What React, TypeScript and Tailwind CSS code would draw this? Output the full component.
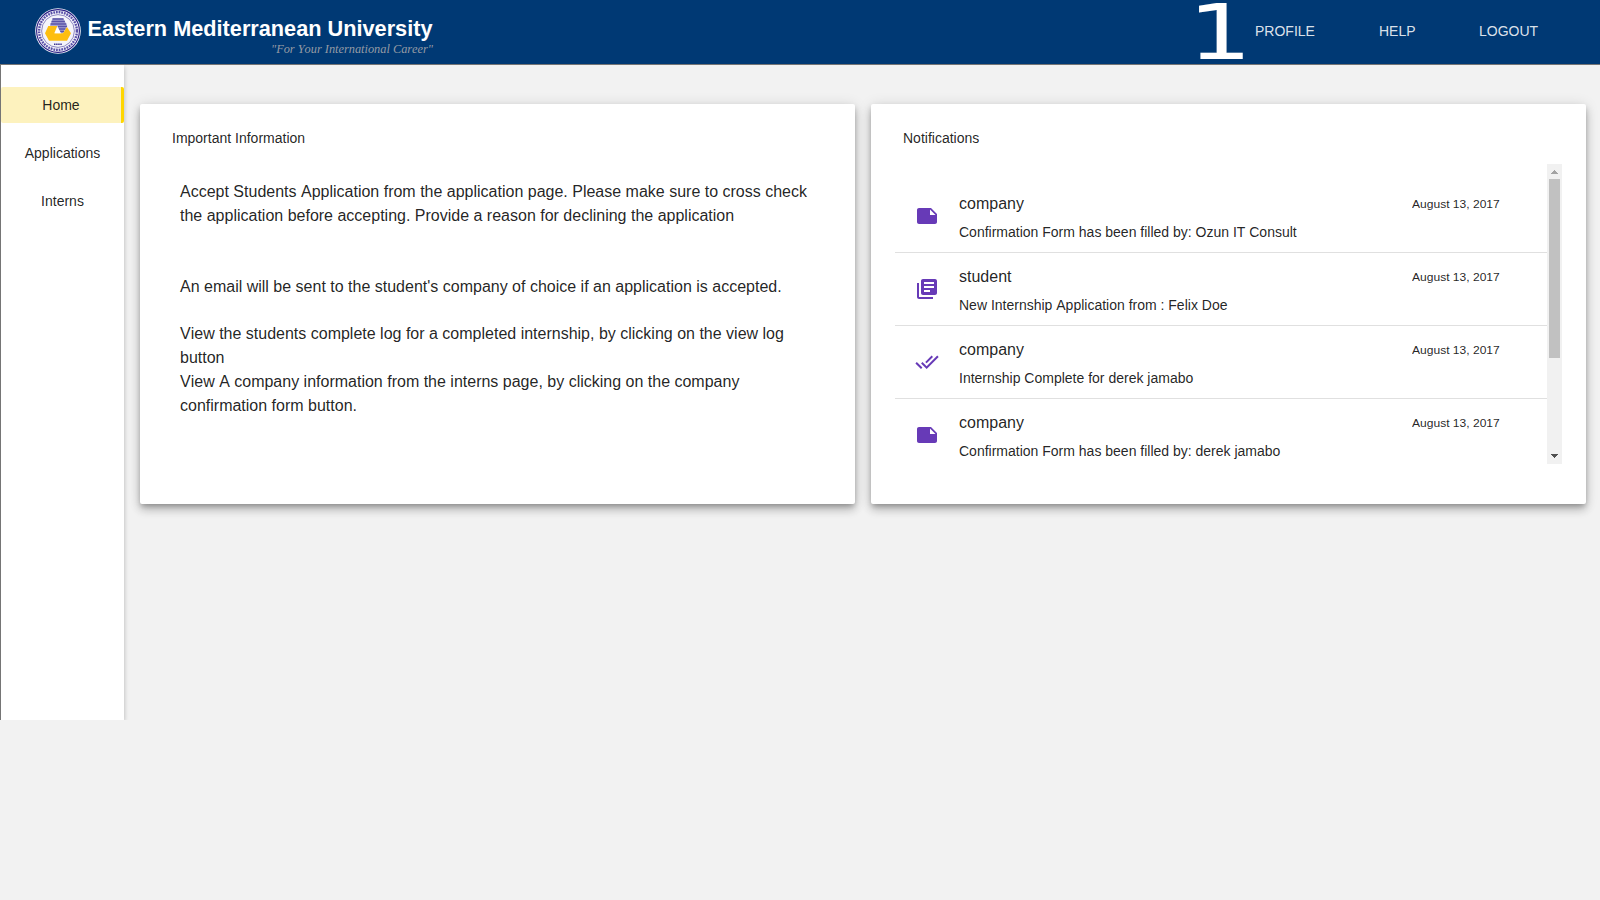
import React from "react";
import { MdNote, MdLibraryBooks, MdDoneAll } from "react-icons/md";

const cardClass =
  "h-[400px] flex-1 rounded-[2px] bg-white shadow-[0_3px_5px_-1px_rgba(0,0,0,0.22),0_6px_10px_0_rgba(0,0,0,0.2),0_1px_14px_0_rgba(0,0,0,0.12)]";

const notifications = [
  { icon: MdNote, title: "company", text: "Confirmation Form has been filled by: Ozun IT Consult" },
  { icon: MdLibraryBooks, title: "student", text: "New Internship Application from : Felix Doe" },
  { icon: MdDoneAll, title: "company", text: "Internship Complete for derek jamabo" },
  { icon: MdNote, title: "company", text: "Confirmation Form has been filled by: derek jamabo" },
];

function Logo() {
  return (
    <svg width="410" height="54" viewBox="0 0 410 54" className="ml-[34px] mt-[7px] block overflow-visible">
      <circle cx="24" cy="24" r="22.8" fill="#f4f4fa" />
      <circle cx="24" cy="24" r="21.4" fill="none" stroke="#2b1f86" strokeWidth="1.1" />
      <circle cx="24" cy="24" r="18.900" fill="none" stroke="#5950a8" strokeWidth="2.4" strokeDasharray="1.8 0.9" />
      <circle cx="24" cy="24" r="16.4" fill="none" stroke="#4a409c" strokeWidth="0.6" />
      <path d="M18.700 11.300h10.600l4 7.700-4.300 7.300H25.500l-2.200-7.300H16z" fill="#a5a3d2" />
      <path d="M18.500 12h11M17.500 14.500h13.400M16.500 17h15.800M24 19.500h9M25 22h6.500M26 24.500h4" stroke="#5a54a8" strokeWidth="1.300" />
      <path d="M14.300 19h9l-3 7.300h8.700l4-6.300 4 6.300-4 7.400H15L11 26.300z" fill="#fdbe10" />
      <path d="M23.500 20l3.600 6.300h-6.400z" fill="#fff" />
      <path d="M20 37.200h8" stroke="#3b338f" strokeWidth="1.600" strokeDasharray="1.500 .6" />
      <text x="53.500" y="29" fontSize="21.500" fontWeight="700" fill="#fff" textLength="345" lengthAdjust="spacingAndGlyphs" fontFamily="'Liberation Sans', sans-serif">
        Eastern Mediterranean University
      </text>
      <text x="237" y="46" fontSize="13.500" fontStyle="italic" fill="#959ba4" textLength="162" lengthAdjust="spacingAndGlyphs" fontFamily="'Liberation Serif', serif">
        "For Your International Career"
      </text>
    </svg>
  );
}

function Header() {
  return (
    <header className="flex h-16 items-start justify-between bg-[#003974]">
      <Logo />
      <nav className="flex h-16 text-[14px] leading-[62px] text-white/87">
        <svg width="66" height="64" className="mr-px block overflow-visible">
          <text x="0" y="59" fontSize="76.800" fill="#fff" textLength="64" lengthAdjust="spacingAndGlyphs" fontFamily="'DejaVu Sans', sans-serif">
            1
          </text>
        </svg>
        <a className="w-[124px]">PROFILE</a>
        <a className="w-[100px]">HELP</a>
        <a className="w-[121px]">LOGOUT</a>
      </nav>
    </header>
  );
}

function Sidebar() {
  return (
    <aside className="-mr-[9px] flex h-[655px] w-[134px] shrink-0 overflow-hidden border-l border-[#757575]">
      <div className="h-full w-[123px] shrink-0 bg-white pt-[22px] text-center text-[14px] leading-9 shadow-[0_2px_5px_0_rgba(0,0,0,0.26)]">
        <div className="h-9 rounded-[2px] border-r-[3px] border-[#ffd600] bg-[#fdf2be]">Home</div>
        <div className="mt-3">Applications</div>
        <div className="mt-3">Interns</div>
      </div>
    </aside>
  );
}

function Scrollbar() {
  return (
    <div className="flex h-[300px] w-[15px] flex-col items-center bg-[#f1f1f1]">
      <svg width="15" height="15" shapeRendering="crispEdges">
        <path d="M4 10h7L7.500 6z" fill="#a3a3a3" />
      </svg>
      <div className="h-[179px] w-[11px] bg-[#c1c1c1]" />
      <svg width="15" height="15" className="mt-auto" shapeRendering="crispEdges">
        <path d="M4 5h7L7.500 9z" fill="#505050" />
      </svg>
    </div>
  );
}

export default function App() {
  return (
    <div className="h-[900px] w-[1600px] overflow-hidden bg-[#f2f2f2] font-['Liberation_Sans',sans-serif] text-black/87 [font-kerning:none]">
      <Header />
      <div className="flex border-t border-[#757575]">
        <Sidebar />
        <main className="flex flex-1 gap-4 pl-[15px] pr-[14px] pt-[39px]">
          <section className={cardClass}>
            <h2 className="pl-8 pt-6 text-[14px] leading-5">Important Information</h2>
            <div className="w-[680px] pl-10 pt-8 text-[16px] leading-6">
              <p>Accept Students Application from the application page. Please make sure to cross check the application before accepting. Provide a reason for declining the application</p>
              <p className="mt-[47px]">An email will be sent to the student's company of choice if an application is accepted.</p>
              <p className="mt-[23px]">View the students complete log for a completed internship, by clicking on the view log button</p>
              <p>View A company information from the interns page, by clicking on the company confirmation form button.</p>
            </div>
          </section>
          <section className={cardClass}>
            <h2 className="pl-8 pt-6 text-[14px] leading-5">Notifications</h2>
            <div className="ml-6 mt-4 flex h-[300px] w-[667px] overflow-hidden">
              <ul className="flex-1 pt-4">
                {notifications.map(({ icon: Icon, title, text }, i) => (
                  <li key={i} className="flex h-[73px] border-b border-[#e0e0e0] pl-5">
                    <Icon size={24} className="mt-6 shrink-0 text-[#673ab7]" />
                    <div className="ml-5 w-[453px] pt-3">
                      <h3 className="text-[16px] leading-6">{title}</h3>
                      <p className="mt-1.5 text-[14px] leading-5">{text}</p>
                    </div>
                    <span className="origin-left scale-x-[1.095] pt-3 text-[11px] leading-6">August 13, 2017</span>
                  </li>
                ))}
              </ul>
              <Scrollbar />
            </div>
          </section>
        </main>
      </div>
    </div>
  );
}
